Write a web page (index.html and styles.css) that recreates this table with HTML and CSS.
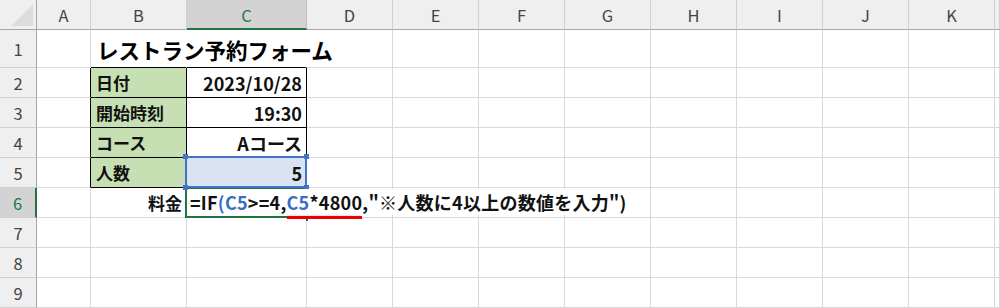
FILE: index.html
```html
<!DOCTYPE html>
<html lang="ja">
<head>
<meta charset="utf-8">
<link rel="stylesheet" href="styles.css">
</head>
<body>
<div class="sheet">
  <div class="corner"><svg width="36" height="29" viewBox="0 0 36 29"><polygon points="11,26 33,26 33,5" fill="#dcdcdc"/></svg></div>
  <div class="hd">A</div>
  <div class="hd">B</div>
  <div class="hd sel">C</div>
  <div class="hd">D</div>
  <div class="hd">E</div>
  <div class="hd">F</div>
  <div class="hd">G</div>
  <div class="hd">H</div>
  <div class="hd">I</div>
  <div class="hd">J</div>
  <div class="hd">K</div>
  <div class="hd"></div>

  <div class="rh">1</div>
  <div class="c"></div>
  <div class="c nr bb"><span class="title">レストラン予約フォーム</span></div>
  <div class="c nr bb"></div>
  <div class="c"></div><div class="c"></div><div class="c"></div><div class="c"></div><div class="c"></div><div class="c"></div><div class="c"></div><div class="c"></div><div class="c"></div>

  <div class="rh">2</div>
  <div class="c br"></div>
  <div class="c lab">日付</div>
  <div class="c val">2023/10/28</div>
  <div class="c"></div><div class="c"></div><div class="c"></div><div class="c"></div><div class="c"></div><div class="c"></div><div class="c"></div><div class="c"></div><div class="c"></div>

  <div class="rh">3</div>
  <div class="c br"></div>
  <div class="c lab">開始時刻</div>
  <div class="c val">19:30</div>
  <div class="c"></div><div class="c"></div><div class="c"></div><div class="c"></div><div class="c"></div><div class="c"></div><div class="c"></div><div class="c"></div><div class="c"></div>

  <div class="rh">4</div>
  <div class="c br"></div>
  <div class="c lab">コース</div>
  <div class="c val">Aコース</div>
  <div class="c"></div><div class="c"></div><div class="c"></div><div class="c"></div><div class="c"></div><div class="c"></div><div class="c"></div><div class="c"></div><div class="c"></div>

  <div class="rh">5</div>
  <div class="c br"></div>
  <div class="c lab">人数</div>
  <div class="c val ref">5<span class="refbox"><i class="h tl"></i><i class="h tr"></i><i class="h bl"></i><i class="h br2"></i></span></div>
  <div class="c"></div><div class="c"></div><div class="c"></div><div class="c"></div><div class="c"></div><div class="c"></div><div class="c"></div><div class="c"></div><div class="c"></div>

  <div class="rh sel">6</div>
  <div class="c"></div>
  <div class="c plain-r">料金</div>
  <div class="c active"><span class="frame"></span><span class="editor">=IF<span class="blue">(C5</span>&gt;=4,<span class="squig"><span class="blue">C5</span>*4800</span>,"※人数に4以上の数値を入力")</span><i class="fill"></i></div>
  <div class="c"></div><div class="c"></div><div class="c"></div><div class="c"></div><div class="c"></div><div class="c"></div><div class="c"></div><div class="c"></div><div class="c"></div>

  <div class="rh">7</div>
  <div class="c"></div><div class="c"></div><div class="c"></div><div class="c"></div><div class="c"></div><div class="c"></div><div class="c"></div><div class="c"></div><div class="c"></div><div class="c"></div><div class="c"></div><div class="c"></div>

  <div class="rh">8</div>
  <div class="c"></div><div class="c"></div><div class="c"></div><div class="c"></div><div class="c"></div><div class="c"></div><div class="c"></div><div class="c"></div><div class="c"></div><div class="c"></div><div class="c"></div><div class="c"></div>

  <div class="rh">9</div>
  <div class="c"></div><div class="c"></div><div class="c"></div><div class="c"></div><div class="c"></div><div class="c"></div><div class="c"></div><div class="c"></div><div class="c"></div><div class="c"></div><div class="c"></div><div class="c"></div>
</div>
</body>
</html>
```

FILE: styles.css
```css
html, body {
  margin: 0;
  padding: 0;
  background: #ffffff;
  overflow: hidden;
}

.sheet {
  display: grid;
  grid-template-columns: 37px 54px 96px 120px repeat(8, 86px) 1fr;
  grid-template-rows: 30px 38px repeat(8, 30px);
  width: 1000px;
  height: 308px;
  font-family: "Noto Sans CJK JP", "Noto Sans", sans-serif;
}

.sheet > div {
  box-sizing: border-box;
  min-width: 0;
}

.corner {
  background: #efefef;
  border-right: 1px solid #a6a6a6;
  border-bottom: 1px solid #a6a6a6;
}

.corner svg {
  display: block;
}

.hd {
  background: #efefef;
  border-right: 1px solid #d0d0d0;
  border-bottom: 1px solid #a6a6a6;
  color: #444444;
  font-size: 16.5px;
  display: flex;
  align-items: center;
  justify-content: center;
  padding-top: 1px;
}

.hd.sel {
  background: #d3d3d3;
  color: #217346;
  border-bottom: 2px solid #217346;
  border-right-color: #bdbdbd;
}

.rh {
  background: #efefef;
  border-right: 1px solid #a6a6a6;
  border-bottom: 1px solid #d0d0d0;
  color: #444444;
  font-size: 16.5px;
  display: flex;
  align-items: center;
  justify-content: center;
  padding-top: 1px;
}

.rh.sel {
  background: #d3d3d3;
  color: #217346;
  border-right: 2px solid #217346;
}

.c {
  border-right: 1px solid #d9d9d9;
  border-bottom: 1px solid #d9d9d9;
  display: flex;
  align-items: center;
  font-size: 17px;
  font-weight: 700;
  color: #111111;
  white-space: nowrap;
  position: relative;
}

.c.nr {
  border-right-color: transparent;
}

.c.bb {
  border-bottom-color: #000000;
}

.c.br {
  border-right-color: #000000;
}

.title {
  font-size: 21.5px;
  font-weight: 700;
  padding-left: 6px;
  padding-top: 2px;
  color: #000000;
}

.lab {
  background: #c6e0b4;
  border-right-color: #000000;
  border-bottom-color: #000000;
  padding-left: 5px;
}

.val {
  border-right-color: #000000;
  border-bottom-color: #000000;
  justify-content: flex-end;
  padding-right: 4px;
  font-size: 18px;
}

.ref {
  background: #dae3f3;
}

.refbox {
  position: absolute;
  left: -2px;
  top: -2px;
  right: -1px;
  bottom: -1px;
  border: 2px solid #4472c4;
  z-index: 3;
}

.h {
  position: absolute;
  width: 5px;
  height: 5px;
  background: #4472c4;
}

.h.tl { left: -4px; top: -4px; }
.h.tr { right: -4px; top: -4px; }
.h.bl { left: -4px; bottom: -4px; }
.h.br2 { right: -4px; bottom: -4px; }

.plain-r {
  justify-content: flex-end;
  padding-right: 4px;
}

.active {
  overflow: visible;
}

.frame {
  position: absolute;
  left: -2px;
  top: -1px;
  right: -1px;
  bottom: -1px;
  border: 2px solid #217346;
  border-right: 0;
  z-index: 2;
}

.editor {
  position: absolute;
  left: 1px;
  top: 1px;
  height: 26px;
  display: flex;
  align-items: center;
  padding: 0 4px 0 2px;
  background: #ffffff;
  z-index: 4;
  font-size: 18px;
  font-weight: 700;
  letter-spacing: 0.25px;
  color: #111111;
}

.blue {
  color: #3a6fc4;
}

.squig {
  position: relative;
}

.squig::before {
  content: "";
  position: absolute;
  left: 0;
  right: 2px;
  bottom: -2px;
  height: 3px;
  background: linear-gradient(#ffffff, #cfcfcf);
}

.squig::after {
  content: "";
  position: absolute;
  left: 0;
  right: 0;
  bottom: -4px;
  height: 3px;
  background: #ee0000;
  z-index: 5;
}

.fill {
  position: absolute;
  right: -2px;
  bottom: -4px;
  width: 2px;
  height: 4px;
  background: #217346;
  z-index: 3;
}
```
